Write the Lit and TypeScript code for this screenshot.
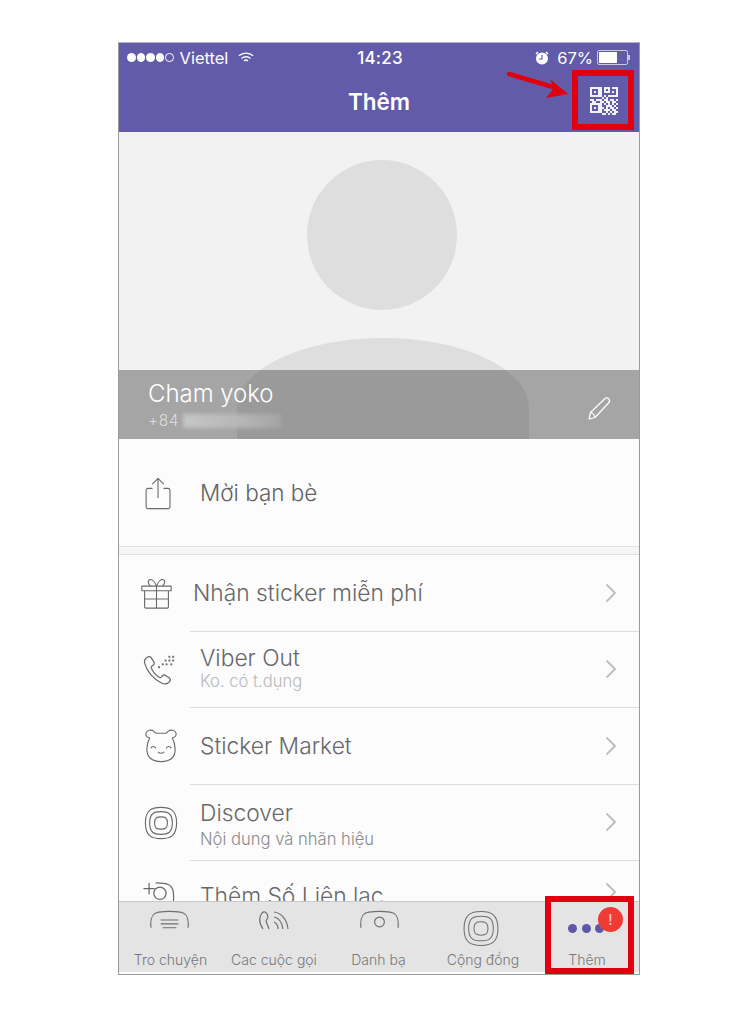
import { LitElement, html, css, svg } from "lit";
import { customElement } from "lit/decorators.js";

const stroke = (inner: unknown, vb = "0 0 36 36", cls = "ic") =>
  html`<svg class=${cls} viewBox=${vb} fill="none" stroke="currentColor" stroke-width="1.200" stroke-linecap="round" stroke-linejoin="round">${inner}</svg>`;

const share = stroke(svg`<path d="M11 13H6.500a2 2 0 0 0-2 2v18a2 2 0 0 0 2 2h22a2 2 0 0 0 2-2V15a2 2 0 0 0-2-2H24"/><path d="M17.500 23V2M11.500 8l6-6 6 6"/>`);
const gift = stroke(svg`<path d="M2 10h32v5H2zM5 15v17.500A1.500 1.500 0 0 0 6.500 34h23a1.500 1.500 0 0 0 1.500-1.500V15M18 10v24M5 24h26M18 10c-2-5-5-8-7.500-7S9 9 12 10M18 10c2-5 5-8 7.500-7S27 9 24 10"/>`, "0 0 36 36", "ic gift");
const phone = html`<svg class="ic" viewBox="0 0 36 36" fill="none" stroke="currentColor" stroke-width="1.300"><path d="M5.500 4.500c-2.500 1.500-3.500 4-2.500 7 2.500 8 9 16.500 18 20.500 3 1.300 6.500.5 8.500-2 1-1.300.8-2.500-.5-3.500l-4-2.800c-1.200-.8-2.300-.6-3.200.4l-1.300 1.500c-.6.6-1.300.7-2 .3-3.500-2-7-6-8.700-10-.3-.7-.1-1.400.5-1.900l1.700-1.200c1.100-.9 1.300-2 .7-3.200L10 5.500C9 3.700 7.300 3.400 5.500 4.500Z"/><g fill="currentColor" stroke="none"><rect x="28" y="3" width="2" height="2"/><rect x="32" y="3" width="2" height="2"/><rect x="24" y="7" width="2" height="2"/><rect x="28" y="7" width="2" height="2"/><rect x="32" y="7" width="2" height="2"/><rect x="21" y="11" width="2" height="2"/><rect x="25" y="11" width="2" height="2"/><rect x="30" y="11" width="2" height="2"/><rect x="17" y="14" width="2" height="2"/></g></svg>`;
const bear = stroke(svg`<path d="M6 9.500C2.500 8.500 1 6 2.500 3.500S8 .5 10.500 2.500C11.500 3.500 12 4.500 13 4.500h10c1 0 1.500-1 2.500-2C28 .5 32 1 33.500 3.500S33.500 8.500 30 9.500c2 3.500 3 7.500 3 12 0 8-5 13-15 13S3 29.500 3 21.500c0-4.500 1-8.500 3-12Z"/><path d="M7.500 20c1.200-2 3.500-2 4.800 0M23.700 20c1.300-2 3.600-2 4.800 0M15 24.500c1.500 1.500 4.500 1.500 6 0"/>`, "0 0 36 36", "ic shifted");
const rings = (cls = "ic shifted", sw = "1.200") => html`<svg class=${cls} viewBox="0 0 36 36" fill="none" stroke="currentColor" stroke-width=${sw}><path d="M18 1.500c10 0 16.500 3 16.500 16.500S28 34.500 18 34.500 1.500 31.500 1.500 18 8 1.500 18 1.500Z"/><path d="M18 6c7.500 0 12 2 12 12s-4.500 12-12 12S6 28 6 18 10.500 6 18 6Z"/><path d="M18 11.500c4.500 0 6.800 1 6.800 6.500S22.500 24.500 18 24.500 11.200 23.500 11.200 18 13.500 11.500 18 11.500Z"/></svg>`;
const addContact = html`<svg class="ic" viewBox="0 0 36 36" fill="none" stroke="currentColor" stroke-width="1.300" stroke-linecap="round"><path d="M2 7h11M7.500 1.500v11M15 1c12 0 17 2 18 9 .7 5 .5 11-.5 16"/><circle cx="19" cy="12" r="6.500"/></svg>`;
const chevron = html`<svg class="chev" viewBox="0 0 12 20" fill="none" stroke="currentColor" stroke-width="1.800" stroke-linecap="round" stroke-linejoin="round"><path d="M2 2l8 8-8 8"/></svg>`;

const qrModules = [
  "11111101110111", "10001101010001", "10101101110101", "10001100000001", "11111101011111",
  "00000010100000", "11011101101101", "01100110110110", "11111101010101", "10001100111010",
  "10101110101101", "10001101110110", "11111100101011", "00000011010110",
];

@customElement("app-root")
export class AppRoot extends LitElement {
  static styles = css`
    :host { display: block; height: 1021px; background: #fff; font-family: Inter, "Liberation Sans", sans-serif; color: #6d6d6f; }
    * { box-sizing: border-box; }
    .phone { position: relative; width: 522px; height: 933px; margin-left: 118px; top: 42px; border: 1px solid #9a9a9c; border-top-color: #b5b3c6; display: flex; flex-direction: column; overflow: hidden; background: #fcfcfc; }
    .head { flex: 0 0 89px; background: #625ba9; color: #fff; display: flex; flex-direction: column; }
    .status { height: 29px; padding: 0 9px 0 8px; display: grid; grid-template-columns: 1fr auto 1fr; align-items: center; font-size: 16.500px; font-weight: 400; }
    .st-left, .st-right { display: flex; align-items: center; }
    .st-right { justify-content: flex-end; }
    .dots { display: flex; gap: 1px; margin-right: 6px; }
    .dots i { width: 8.500px; height: 8.500px; border-radius: 50%; background: #fff; border: 1px solid #fff; }
    .dots i.off { background: transparent; }
    .wifi { width: 16px; height: 13px; margin-left: 10px; }
    .alarm { width: 14px; height: 14px; margin-right: 8px; }
    .time { font-size: 17px; font-weight: 500; letter-spacing: .2px; margin-left: 3px; }
    .bat { display: flex; align-items: center; margin-left: 4px; }
    .bat b { display: block; width: 31px; height: 15px; border: 1px solid #c9c6e2; border-radius: 2px; padding: 1px; }
    .bat b span { display: block; width: 67%; height: 100%; background: #fff; }
    .bat u { display: block; width: 2px; height: 5px; background: #c9c6e2; }
    .title { flex: 1; display: flex; align-items: center; justify-content: center; font-size: 22.500px; font-weight: 600; padding-bottom: 2px; }
    .hero { flex: 0 0 307px; position: relative; background: #f2f2f3; overflow: hidden; display: flex; flex-direction: column; justify-content: flex-end; }
    .head-shape { position: absolute; left: 188px; top: 28px; width: 150px; height: 150px; border-radius: 50%; background: #dedede; }
    .body-shape { position: absolute; left: 118px; top: 206px; width: 292px; height: 140px; border-radius: 146px 146px 0 0 / 70px 70px 0 0; background: #dedede; }
    .band { position: relative; height: 69px; background: rgba(60,60,60,.42); color: #fff; padding: 9px 27px 0 29px; display: flex; justify-content: space-between; }
    .name { font-size: 24px; font-weight: 300; line-height: 30px; letter-spacing: -.05px; }
    .num { display: flex; align-items: center; gap: 4px; margin-top: 2px; font-size: 15.500px; font-weight: 300; line-height: 20px; color: #dcdcdc; letter-spacing: .6px; }
    .blur { width: 98px; height: 14px; background: linear-gradient(90deg, #c6c6c6, #b6b6b6 60%, #a4a4a4); filter: blur(2px); }
    .pen { width: 26px; height: 26px; color: #fff; margin-top: 17px; }
    .invite { flex: 0 0 108px; display: flex; align-items: center; padding-left: 23px; gap: 25px; border-bottom: 1px solid #e2e2e2; font-size: 22.500px; font-weight: 300; color: #616163; }
    .invite .ic { width: 33px; height: 36px; }
    .gap { flex: 0 0 8px; background: #f6f6f6; border-bottom: 1px solid #dfdfdf; }
    .rows { flex: 1; min-height: 0; overflow: hidden; background: #fcfcfc; }
    .row { height: 76.500px; display: flex; align-items: center; }
    .ic { width: 34px; height: 34px; color: #6a6a6c; flex: none; }
    .ic.shifted { margin-left: 4px; }
    .ic.gift { width: 33px; height: 33px; }
    .iconcol { width: 71px; display: flex; justify-content: center; padding-left: 8px; flex: none; }
    .row.first .iconcol { padding-left: 4px; }
    .body { flex: 1; height: 100%; display: flex; align-items: center; justify-content: space-between; padding: 0 22px 0 10px; border-bottom: 1px solid #dcdcdc; }
    .row.first .body { padding-left: 3px; }
    .row.viber .text { padding-bottom: 3px; }
    .row.discover .text { padding-top: 3px; }
    .row.discover .sub { margin-top: 3px; }
    .row.last .body { border-bottom: 0; align-items: flex-start; padding-top: 21px; }
    .label { font-size: 22.800px; font-weight: 300; line-height: 28px; color: #68686a; white-space: nowrap; }
    .sub { font-size: 16.600px; font-weight: 300; line-height: 19px; color: #8b8b8d; white-space: nowrap; }
    .sub.pale { color: #b9b9bb; }
    .chev { width: 12px; height: 20px; color: #bdbdbf; flex: none; }
    .tabs { flex: 0 0 71px; background: #e4e4e4; border-top: 1px solid #c9c9c9; display: grid; grid-template-columns: 103px 104px 105px 104px 1fr; margin-bottom: 2px; }
    .tab { display: flex; flex-direction: column; align-items: center; justify-content: flex-end; font-size: 14px; font-weight: 300; color: #77777a; padding-bottom: 4px; position: relative; white-space: nowrap; }
    .tab svg { position: absolute; color: #6f6f71; }
    .tab .arch { top: 7px; width: 41px; height: 20px; left: 30px; }
    .tab .arch.third { left: 33px; }
    .tab .calls { top: 8px; width: 36px; height: 20px; left: 35px; }
    .tab .rings { top: 8px; left: 29px; width: 42px; height: 37px; }
    .more { position: absolute; top: 22px; left: 33px; display: flex; gap: 4.500px; }
    .more i { width: 9px; height: 9px; border-radius: 50%; background: #5f58a8; }
    .badge { position: absolute; top: 5px; left: 63px; width: 25px; height: 25px; border-radius: 50%; background: #ef3b36; color: #f8c9c5; font-size: 14px; font-weight: 500; display: flex; align-items: center; justify-content: center; }
    .mark { position: absolute; border: 6px solid #e0000f; pointer-events: none; }
    .mark.qr { left: 453px; top: 27px; width: 62px; height: 60px; }
    .mark.dots-mark { left: 426px; top: 853px; width: 89px; height: 78px; }
    .qrcode { position: absolute; left: 471px; top: 44px; width: 28px; height: 28px; display: grid; grid-template-columns: repeat(14, 2px); grid-auto-rows: 2px; }
    .qrcode i.on { background: #f2f1f8; }
    .arrow { position: absolute; left: 386px; top: 28px; width: 66px; height: 30px; }
  `;

  render() {
    return html`
      <div class="phone">
        <header class="head">
          <div class="status">
            <div class="st-left">
              <span class="dots"><i></i><i></i><i></i><i></i><i class="off"></i></span>
              <span>Viettel</span>
              <svg class="wifi" viewBox="0 0 18 14" fill="none" stroke="#fff" stroke-width="1.500"><path d="M1 5c4.500-4 11.500-4 16 0M4 8c2.800-2.500 7.200-2.500 10 0M6.800 10.800c1.200-1 3.200-1 4.400 0"/><path d="M9 12.500l.1.100" stroke-width="2"/></svg>
            </div>
            <div class="time">14:23</div>
            <div class="st-right">
              <svg class="alarm" viewBox="0 0 14 14"><circle cx="7" cy="7.500" r="6" fill="#fff"/><path d="M7 4v4H4" stroke="#625ba9" stroke-width="1.200" fill="none"/><path d="M1 3l2-2M13 3l-2-2" stroke="#fff" stroke-width="1.500"/></svg>
              <span>67%</span>
              <span class="bat"><b><span></span></b><u></u></span>
            </div>
          </div>
          <div class="title">Thêm</div>
        </header>

        <section class="hero">
          <div class="head-shape"></div>
          <div class="body-shape"></div>
          <div class="band">
            <div>
              <div class="name">Cham yoko</div>
              <div class="num">+84 <span class="blur"></span></div>
            </div>
            <svg class="pen" viewBox="0 0 26 26" fill="none" stroke="currentColor" stroke-width="1.200" stroke-linejoin="round"><path d="M3 23l1.500-6.500L18.500 3c1.500-1.300 3.200-1.300 4.300-.2s1 2.800-.3 4.200L9 21.500 3 23Z"/><path d="M4.500 16.500c2 .3 4 2.500 4.500 5"/></svg>
          </div>
        </section>

        <div class="invite">${share}<span>Mời bạn bè</span></div>
        <div class="gap"></div>

        <div class="rows">
          <div class="row first"><div class="iconcol">${gift}</div><div class="body"><div class="label">Nhận sticker miễn phí</div>${chevron}</div></div>
          <div class="row viber"><div class="iconcol">${phone}</div><div class="body"><div class="text"><div class="label">Viber Out</div><div class="sub pale">Ko. có t.dụng</div></div>${chevron}</div></div>
          <div class="row"><div class="iconcol">${bear}</div><div class="body"><div class="label">Sticker Market</div>${chevron}</div></div>
          <div class="row discover"><div class="iconcol">${rings()}</div><div class="body"><div class="text"><div class="label">Discover</div><div class="sub">Nội dung và nhãn hiệu</div></div>${chevron}</div></div>
          <div class="row last"><div class="iconcol">${addContact}</div><div class="body"><div class="label">Thêm Số Liên lạc</div>${chevron}</div></div>
        </div>

        <nav class="tabs">
          <div class="tab">
            <svg class="arch" viewBox="0 0 42 20" fill="none" stroke="currentColor" stroke-width="1.200"><path d="M2 19c-1-10 1-15 8-16 7-1 15-1 22 0 7 1 9 6 8 16"/><path d="M12 11h18M12 15h18M14 19h14"/></svg>
            <span>Tro chuyện</span>
          </div>
          <div class="tab">
            <svg class="calls" viewBox="0 0 36 20" fill="none" stroke="currentColor" stroke-width="1.200"><path d="M6 19C2 13 2 7 5 3c2-2 4-1 5 1s1 4 0 5l-1 2 3 8"/><path d="M17 2c7 1 13 7 14 17M17 7c5 1 8 5 9 12M17 12c2 1 4 3 4 7"/></svg>
            <span>Cac cuộc gọi</span>
          </div>
          <div class="tab">
            <svg class="arch third" viewBox="0 0 42 20" fill="none" stroke="currentColor" stroke-width="1.200"><path d="M2 19c-1-10 1-15 8-16 7-1 15-1 22 0 7 1 9 6 8 16"/><circle cx="21" cy="13" r="5"/></svg>
            <span>Danh bạ</span>
          </div>
          <div class="tab">
            ${rings("rings", "1")}
            <span>Cộng đồng</span>
          </div>
          <div class="tab">
            <div class="more"><i></i><i></i><i></i></div>
            <div class="badge">!</div>
            <span>Thêm</span>
          </div>
        </nav>

        <svg class="arrow" viewBox="0 0 66 30"><path d="M4 3l44 13" stroke="#e0000f" stroke-width="4.500" stroke-linecap="round"/><path d="M63 23L41 27l8-10-4-9Z" fill="#e0000f"/></svg>
        <div class="qrcode">${qrModules.flatMap((r) => [...r].map((c) => html`<i class=${c === "1" ? "on" : ""}></i>`))}</div>
        <div class="mark qr"></div>
        <div class="mark dots-mark"></div>
      </div>
    `;
  }
}
